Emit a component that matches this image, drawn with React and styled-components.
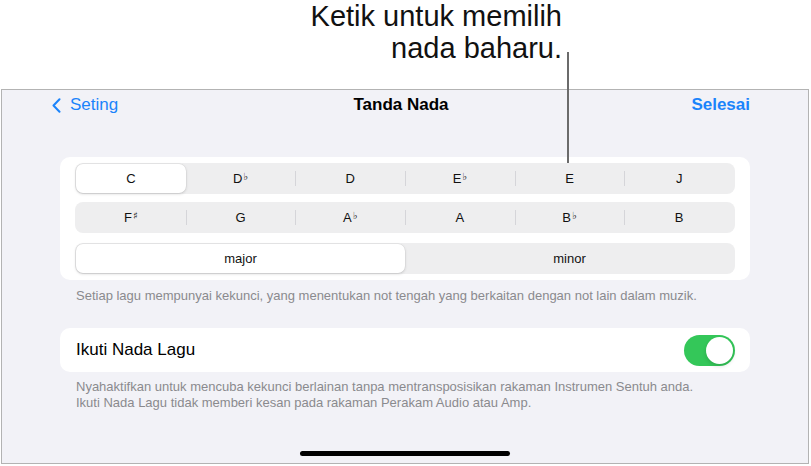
import React from 'react';
import styled, { createGlobalStyle } from 'styled-components';

const GlobalStyle = createGlobalStyle`
    html, body {
        margin: 0;
        padding: 0;
        background: #ffffff;
    }
    body {
        font-family: "Liberation Sans", Arial, sans-serif;
        -webkit-font-smoothing: antialiased;
    }
`;

const Page = styled.div`
    position: relative;
    width: 811px;
    height: 466px;
    overflow: hidden;
    background: #ffffff;
`;

const Callout = styled.div`
    height: 89px;
    display: flex;
    justify-content: flex-end;
    padding: 0 249px 0 0;
    box-sizing: border-box;
`;

const CalloutText = styled.div`
    font-size: 29px;
    line-height: 32px;
    color: #111111;
    text-align: right;
`;

// leader line runs from the label down onto the E segment
const Leader = styled.div`
    position: absolute;
    left: 567px;
    top: 52px;
    width: 1.5px;
    height: 111px;
    background: #6b6b6b;
    z-index: 2;
`;

const Screen = styled.div`
    margin-left: 1px;
    width: 808px;
    height: 375px;
    box-sizing: border-box;
    border: 1px solid #b3b3b3;
    background: #f2f2f7;
    display: flex;
    flex-direction: column;
`;

const NavBar = styled.div`
    height: 30px;
    display: grid;
    grid-template-columns: 1fr auto 1fr;
    align-items: center;
    padding: 0 58px 0 50px;
`;

const BackButton = styled.div`
    display: flex;
    align-items: center;
    gap: 9px;
    color: #1b84fb;
    font-size: 17px;
`;

const Title = styled.div`
    font-size: 17px;
    font-weight: 700;
    color: #000000;
`;

const DoneButton = styled.div`
    justify-self: end;
    font-size: 17px;
    font-weight: 700;
    color: #1b84fb;
`;

const Content = styled.div`
    padding: 37px 58px 0;
    display: flex;
    flex-direction: column;
`;

const Card = styled.div`
    background: #ffffff;
    border-radius: 10px;
    padding: 6px 15px;
    display: flex;
    flex-direction: column;
`;

const SegmentRow = styled.div`
    height: 31px;
    margin-top: ${(p) => p.gap || 0}px;
    display: flex;
    align-items: stretch;
    background: #eeeeef;
    border-radius: 8px;
    padding: 1px;
    box-sizing: border-box;
`;

const Segment = styled.div`
    position: relative;
    flex: 1;
    display: flex;
    align-items: center;
    justify-content: center;
    font-size: 13px;
    color: #111111;
    border-radius: 7px;
    background: ${(p) => (p.selected ? '#ffffff' : 'transparent')};
    box-shadow: ${(p) => (p.selected ? '0 1px 3px rgba(0,0,0,0.16), 0 0 0 0.5px rgba(0,0,0,0.06)' : 'none')};

    &::before {
        content: '';
        display: ${(p) => (p.divider ? 'block' : 'none')};
        position: absolute;
        left: 0;
        top: 7px;
        bottom: 7px;
        width: 1px;
        background: #d5d5d9;
    }
`;

const Accidental = styled.span`
    font-family: "DejaVu Sans", sans-serif;
    font-size: 10px;
    font-weight: 700;
    position: relative;
    top: -2px;
    margin-left: 1px;
`;

const Note = styled.div`
    padding: 8px 16px 0;
    font-size: 13px;
    line-height: 16px;
    color: #8a8a8e;
`;

const ToggleCard = styled.div`
    margin-top: 24px;
    height: 44px;
    background: #ffffff;
    border-radius: 10px;
    display: flex;
    align-items: center;
    justify-content: space-between;
    padding: 0 15px 0 16px;
`;

const ToggleLabel = styled.div`
    font-size: 17px;
    color: #000000;
`;

const Switch = styled.div`
    width: 51px;
    height: 31px;
    border-radius: 16px;
    background: #34c759;
    display: flex;
    align-items: center;
    justify-content: ${(p) => (p.on ? 'flex-end' : 'flex-start')};
    padding: 2px;
    box-sizing: border-box;
`;

const Knob = styled.div`
    width: 27px;
    height: 27px;
    border-radius: 50%;
    background: #ffffff;
    box-shadow: 0 2px 4px rgba(0,0,0,0.15);
`;

const FooterNote = styled(Note)`
    padding-top: 7px;
    line-height: 16px;
`;

const HomeBar = styled.div`
    margin: auto auto 7px;
    width: 210px;
    height: 5px;
    border-radius: 3px;
    background: #000000;
`;

const Chevron = () => (
    <svg width="9" height="15" viewBox="0 0 9 15">
        <path d="M7.5 1.2 L1.5 7.5 L7.5 13.8" fill="none" stroke="#1b84fb" strokeWidth="2" strokeLinecap="round" strokeLinejoin="round" />
    </svg>
);

const keysTop = [['C'], ['D', '♭'], ['D'], ['E', '♭'], ['E'], ['J']];
const keysBottom = [['F', '♯'], ['G'], ['A', '♭'], ['A'], ['B', '♭'], ['B']];

const KeyRow = ({ keys, selected, gap }) => (
    <SegmentRow gap={gap}>
        {keys.map(([name, acc], i) => (
            <Segment
                key={name + (acc || '')}
                selected={i === selected}
                divider={i > 0 && i !== selected && i - 1 !== selected}>
                {name}
                {acc && <Accidental>{acc}</Accidental>}
            </Segment>
        ))}
    </SegmentRow>
);

const App = () => {
    return (
        <Page>
            <GlobalStyle />
            <Callout>
                <CalloutText>
                    Ketik untuk memilih<br />nada baharu.
                </CalloutText>
            </Callout>
            <Leader />
            <Screen>
                <NavBar>
                    <BackButton>
                        <Chevron />
                        Seting
                    </BackButton>
                    <Title>Tanda Nada</Title>
                    <DoneButton>Selesai</DoneButton>
                </NavBar>
                <Content>
                    <Card>
                        <KeyRow keys={keysTop} selected={0} />
                        <KeyRow keys={keysBottom} selected={-1} gap={8} />
                        <SegmentRow gap={10}>
                            <Segment selected>major</Segment>
                            <Segment>minor</Segment>
                        </SegmentRow>
                    </Card>
                    <Note>
                        Setiap lagu mempunyai kekunci, yang menentukan not tengah yang berkaitan dengan not lain dalam muzik.
                    </Note>
                    <ToggleCard>
                        <ToggleLabel>Ikuti Nada Lagu</ToggleLabel>
                        <Switch on>
                            <Knob />
                        </Switch>
                    </ToggleCard>
                    <FooterNote>
                        Nyahaktifkan untuk mencuba kekunci berlainan tanpa mentransposisikan rakaman Instrumen Sentuh anda.
                        <br />
                        Ikuti Nada Lagu tidak memberi kesan pada rakaman Perakam Audio atau Amp.
                    </FooterNote>
                </Content>
                <HomeBar />
            </Screen>
        </Page>
    );
};

export default App;
